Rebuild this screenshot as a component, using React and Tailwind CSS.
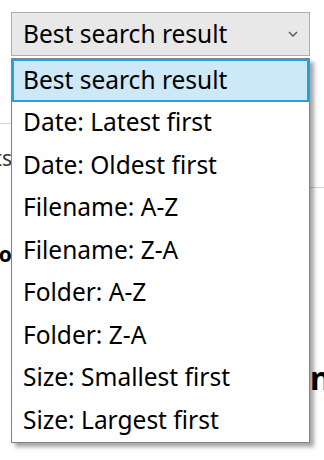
const OPTIONS = [
  'Best search result',
  'Date: Latest first',
  'Date: Oldest first',
  'Filename: A-Z',
  'Filename: Z-A',
  'Folder: A-Z',
  'Folder: Z-A',
  'Size: Smallest first',
  'Size: Largest first',
]

function Chevron() {
  return (
    <svg width="10" height="6" viewBox="0 0 10 6" className="text-[#555]">
      <path d="M1 1l4 4 4-4" fill="none" stroke="currentColor" strokeWidth="1.4" />
    </svg>
  )
}

export default function App() {
  const selected = 0
  return (
    <div className="relative h-[460px] w-[324px] overflow-hidden bg-white font-['Noto_Sans',sans-serif] text-black">
      {/* page behind the open menu */}
      <div className="flex h-full justify-between">
        <div className="flex w-[12px] flex-col items-end overflow-hidden">
          <div className="mt-[123px] h-px w-full bg-[#d4d4d4]" />
          <div className="mt-[20px] text-[21px] leading-[28px] text-[#333]">Results</div>
          <div className="mt-[68px] text-[21px] font-bold leading-[28px]">Photo</div>
        </div>
        <div className="flex w-[14px] flex-col overflow-hidden">
          <div className="mt-[187px] h-px w-[40px] bg-[#d4d4d4]" />
          <div className="mt-[170px] whitespace-nowrap text-[32px] font-bold leading-[40px]">nam</div>
        </div>
      </div>

      {/* select + open list */}
      <div className="absolute left-[11px] top-[12px] w-[299px]">
        <div className="flex h-[44px] items-center justify-between border border-[#adadad] bg-[#e8e8e8] pl-[11px] pr-[11px]">
          <span className="text-[24.5px] leading-none">{OPTIONS[selected]}</span>
          <Chevron />
        </div>
        <div className="mt-[2px] border border-[#828282] bg-white shadow-[4px_4px_4px_rgba(0,0,0,0.35)]">
          {OPTIONS.map((o, i) => (
            <div
              key={o}
              className={
                i === selected
                  ? 'flex h-[42.5px] items-center border-2 border-[#2a9fe0] bg-[#cde8f7] pl-[9px] text-[24.5px]'
                  : 'flex h-[42.5px] items-center pl-[11px] text-[24.5px]'
              }
            >
              {o}
            </div>
          ))}
        </div>
      </div>
    </div>
  )
}
